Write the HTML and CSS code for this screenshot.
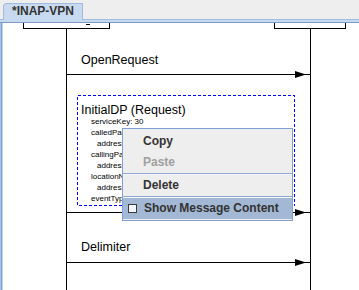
FILE: index.html
```html
<!DOCTYPE html>
<html lang="en">
<head>
    <meta charset="UTF-8">
    <title>INAP-VPN</title>
    <link rel="stylesheet" href="styles.css">
</head>
<body>
    <div class="tabbar">
        <div class="tab">*INAP-VPN</div>
    </div>
    <div class="tabline"></div>

    <div class="canvas">
        <svg class="wires" width="359" height="267" viewBox="0 0 359 267">
            <g fill="none" stroke="#000" shape-rendering="crispEdges">
                <path d="M23.5 -3 V5.5 H109.5 V-3"/>
                <path d="M274.5 -3 V5.5 H345.5 V-3"/>
                <path d="M86 1.5 H90"/>
                <path d="M66.5 5.5 V267"/>
                <path d="M310.5 5.5 V267"/>
                <path d="M66 51.5 H310"/>
                <path d="M66 189.5 H310"/>
                <path d="M66 239.5 H310"/>
                <rect x="77.5" y="72.5" width="217" height="110" stroke="#0000ff" stroke-dasharray="3 2"/>
            </g>
            <g fill="#000">
                <polygon points="295,48 306,51.5 295,55"/>
                <polygon points="295,186 306,189.5 295,193"/>
                <polygon points="295,236 306,239.5 295,243"/>
            </g>
        </svg>

        <div class="label msg-open">OpenRequest</div>

        <div class="msg">
            <div class="msg-title">InitialDP (Request)</div>
            <div class="fields">
                <div>serviceKey: 30</div>
                <div>calledPartyNumber</div>
                <div class="sub">address: 0800123456</div>
                <div>callingPartyNumber</div>
                <div class="sub">address: 4930123456</div>
                <div>locationNumber</div>
                <div class="sub">address: 4930100000</div>
                <div>eventTypeBCSM: collectedInfo</div>
            </div>
        </div>

        <div class="label msg-delim">Delimiter</div>

        <div class="menu">
            <div class="item">Copy</div>
            <div class="item disabled">Paste</div>
            <div class="sep"></div>
            <div class="item">Delete</div>
            <div class="sep"></div>
            <div class="item check selected"><span class="box"></span>Show Message Content</div>
        </div>
    </div>
</body>
</html>
```

FILE: styles.css
```css
* {
    box-sizing: border-box;
    margin: 0;
    padding: 0;
}
body {
    width: 359px;
    height: 290px;
    overflow: hidden;
    background: #fff;
    font-family: "Liberation Sans", Arial, sans-serif;
    color: #000;
}
.tabbar {
    height: 19px;
    background: #eeeeee;
    display: flex;
    align-items: flex-end;
    padding-left: 3px;
}
.tab {
    position: relative;
    z-index: 1;
    width: 80px;
    height: 17px;
    margin-bottom: -1px;
    background: #c7daf0;
    border: 1px solid #a2bbdc;
    border-bottom: none;
    border-top-left-radius: 4px;
    padding-left: 8px;
    font-size: 12px;
    font-weight: bold;
    line-height: 12px;
    padding-top: 1px;
    color: #333;
}
.tabline {
    height: 4px;
    background: #c6d9ef;
    border-top: 1px solid #a6bedd;
    border-bottom: 1px solid #7b9bc6;
}
.canvas {
    position: relative;
    height: 267px;
    overflow: hidden;
    box-shadow: inset 1px 0 #a8c4e8, inset 2px 0 #7b9fd0, inset 3px 0 #c3d6ee;
}
.wires {
    position: absolute;
    left: 0;
    top: 0;
}
.label {
    position: absolute;
    left: 81px;
    font-size: 12.5px;
    line-height: 14px;
}
.msg-open {
    top: 30px;
}
.msg-delim {
    top: 217px;
}
.msg {
    position: absolute;
    left: 81px;
    top: 80px;
}
.msg-title {
    font-size: 12.5px;
    line-height: 14px;
}
.fields {
    margin-top: -1px;
    padding-left: 10px;
    font-size: 8px;
    line-height: 11px;
    white-space: nowrap;
}
.fields .sub {
    padding-left: 6px;
}
.menu {
    position: absolute;
    left: 122px;
    top: 105px;
    width: 171px;
    height: 93px;
    background: #eeeeee;
    border: 1px solid #7f9fd6;
    padding: 2px 0 1px;
}
.item {
    height: 21px;
    line-height: 21px;
    padding-left: 20px;
    font-size: 12px;
    font-weight: bold;
    color: #333;
    white-space: nowrap;
}
.item.disabled {
    color: #a0a0a0;
}
.item.check {
    display: flex;
    align-items: center;
    gap: 7px;
    padding-left: 5px;
}
.item.selected {
    background: #a3b8d4;
}
.box {
    width: 9px;
    height: 9px;
    border: 1px solid #3a3a3a;
    background: #f2f5fa;
}
.sep {
    height: 2px;
    border-top: 1px solid #8ea9d6;
    background: #f8f8f8;
}
```
